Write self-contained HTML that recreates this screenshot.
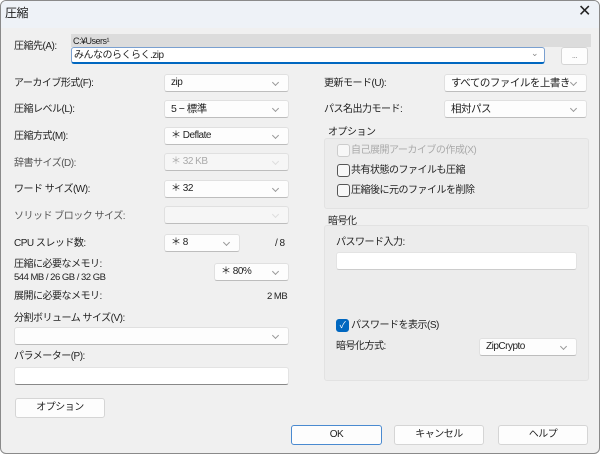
<!DOCTYPE html>
<html><head><meta charset="utf-8"><style>
*{box-sizing:border-box;margin:0;padding:0}
body{width:600px;height:454px;overflow:hidden;background:#fff;font-family:"Liberation Sans","Noto Sans CJK JP",sans-serif;font-size:10px;letter-spacing:-0.5px;color:#222;position:relative}
.win{position:absolute;left:0;top:0;width:600px;height:454px;background:#f0f0f0;border:1px solid #8a8a8a;border-radius:6px;overflow:hidden}
.title{position:absolute;left:0;top:0;width:600px;height:27px;background:#eef2f7}
.a{position:absolute;white-space:nowrap;line-height:13px}
.cb{position:absolute;height:18px;background:#fdfdfd;border:1px solid #e0e0e0;border-bottom-color:#bdbdbd;border-radius:3px;padding-left:6px;line-height:16px;font-size:10px}
.cb::after{content:"";position:absolute;right:10px;top:5px;width:4px;height:4px;border-right:1px solid #999;border-bottom:1px solid #999;transform:rotate(45deg)}
.dis{background:#f6f6f6;color:#aaa}
.dis::after{border-color:#ddd}
.in{position:absolute;height:18px;background:#fff;border:1px solid #e3e3e3;border-bottom-color:#888;border-radius:3px}
.btn{position:absolute;height:20px;background:#fdfdfd;border:1px solid #d5d5d5;border-radius:3px;text-align:center;line-height:18px;font-size:10px}
.grp{position:absolute;border:1px solid #e2e2e2;border-radius:3px;background:#ececec}
.chk{position:absolute;width:13px;height:13px;border:1px solid #555;border-radius:3px;background:#f7f7f7}
</style></head><body><div class="win">
<div class="title"></div>
<div class="a" style="left:4px;top:6px;font-size:12px">圧縮</div>
<div class="a" style="left:577px;top:4px;font-size:16px;font-weight:300">✕</div>
<div style="position:absolute;left:70px;top:33px;width:520px;height:13px;background:#dcdcdc"></div>
<div class="a" style="left:72px;top:34px;font-size:9px">C:¥Users¹</div>
<div class="a" style="left:13px;top:39px">圧縮先(A):</div>
<div class="in" style="left:70px;top:46px;width:474px;height:17px;border:1px solid #7aa0d0;border-bottom:2px solid #0067c0;"></div>
<div class="a" style="left:73px;top:48px">みんなのらくらく.zip</div>
<div class="a" style="left:530px;top:46px;color:#888;font-size:9px">&#8964;</div>
<div class="btn" style="left:560px;top:46px;width:27px;height:18px;color:#888;font-size:8px;line-height:16px">...</div>

<div class="a" style="left:13px;top:76px">アーカイブ形式(F):</div>
<div class="cb" style="left:163px;top:73px;width:125px">zip</div>
<div class="a" style="left:13px;top:102px">圧縮レベル(L):</div>
<div class="cb" style="left:163px;top:99px;width:125px;font-size:10.5px">5 − 標準</div>
<div class="a" style="left:13px;top:129px">圧縮方式(M):</div>
<div class="cb" style="left:163px;top:126px;width:125px">＊ Deflate</div>
<div class="a" style="left:13px;top:156px;color:#555">辞書サイズ(D):</div>
<div class="cb dis" style="left:163px;top:152px;width:125px">＊ 32 KB</div>
<div class="a" style="left:13px;top:182px">ワード サイズ(W):</div>
<div class="cb" style="left:163px;top:179px;width:125px">＊ 32</div>
<div class="a" style="left:13px;top:209px;color:#555">ソリッド ブロック サイズ:</div>
<div class="cb dis" style="left:163px;top:205px;width:125px"></div>
<div class="a" style="left:13px;top:236px">CPU スレッド数:</div>
<div class="cb" style="left:163px;top:233px;width:76px">＊ 8</div>
<div class="a" style="left:274px;top:236px">/ 8</div>
<div class="a" style="left:13px;top:257px">圧縮に必要なメモリ:</div>
<div class="a" style="left:13px;top:270px;font-size:9.5px">544 MB / 26 GB / 32 GB</div>
<div class="cb" style="left:213px;top:262px;width:75px">＊ 80%</div>
<div class="a" style="left:13px;top:289px">展開に必要なメモリ:</div>
<div class="a" style="left:266px;top:289px;font-size:9.5px">2 MB</div>
<div class="a" style="left:13px;top:311px">分割ボリューム サイズ(V):</div>
<div class="cb" style="left:13px;top:326px;width:275px"></div>
<div class="a" style="left:13px;top:349px">パラメーター(P):</div>
<div class="in" style="left:13px;top:366px;width:275px"></div>
<div class="btn" style="left:14px;top:397px;width:90px">オプション</div>

<div class="a" style="left:323px;top:76px">更新モード(U):</div>
<div class="cb" style="left:443px;top:73px;width:143px;font-size:10.5px">すべてのファイルを上書き</div>
<div class="a" style="left:323px;top:102px">パス名出力モード:</div>
<div class="cb" style="left:443px;top:99px;width:143px;font-size:10.5px">相対パス</div>
<div class="grp" style="left:323px;top:137px;width:265px;height:71px"></div>
<div class="a" style="left:327px;top:125px">オプション</div>
<div class="chk" style="left:336px;top:143px;border-color:#ccc"></div>
<div class="a" style="left:350px;top:143px;color:#aaa">自己展開アーカイブの作成(X)</div>
<div class="chk" style="left:336px;top:163px"></div>
<div class="a" style="left:350px;top:163px">共有状態のファイルも圧縮</div>
<div class="chk" style="left:336px;top:183px"></div>
<div class="a" style="left:350px;top:183px">圧縮後に元のファイルを削除</div>
<div class="grp" style="left:323px;top:224px;width:265px;height:156px"></div>
<div class="a" style="left:327px;top:214px">暗号化</div>
<div class="a" style="left:335px;top:235px">パスワード入力:</div>
<div class="in" style="left:335px;top:251px;width:241px;border-bottom-color:#ccc"></div>
<div class="chk" style="left:335px;top:318px;background:#0067c0;border-color:#0067c0;color:#fff;font-size:9px;line-height:11px;text-align:center">✓</div>
<div class="a" style="left:350px;top:318px">パスワードを表示(S)</div>
<div class="a" style="left:335px;top:339px">暗号化方式:</div>
<div class="cb" style="left:478px;top:337px;width:98px">ZipCrypto</div>

<div class="btn" style="left:290px;top:424px;width:91px;border-color:#4a8ad0">OK</div>
<div class="btn" style="left:393px;top:424px;width:90px">キャンセル</div>
<div class="btn" style="left:497px;top:424px;width:90px">ヘルプ</div>
</div></body></html>
